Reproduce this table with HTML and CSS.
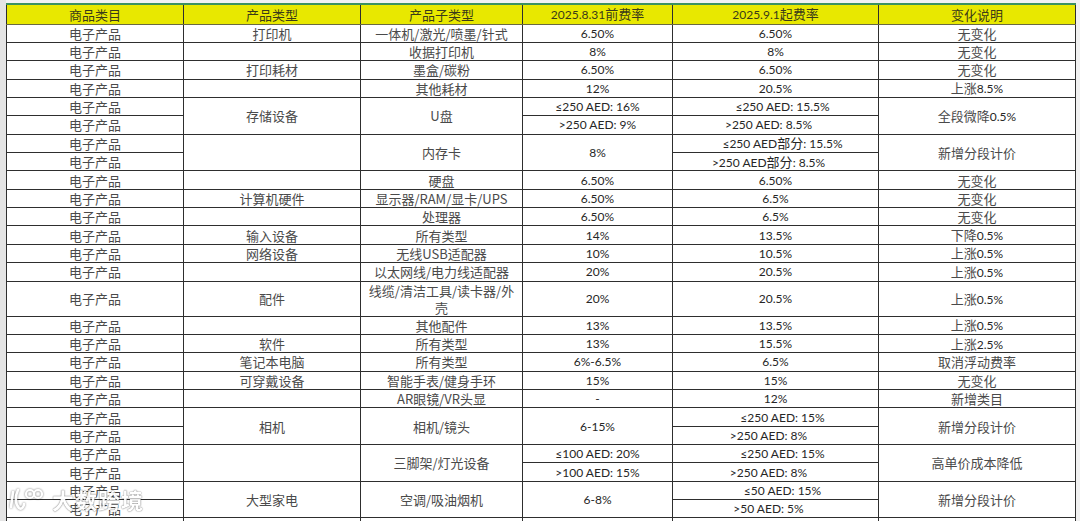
FILE: index.html
```html
<!DOCTYPE html>
<html lang="zh-CN">
<head>
<meta charset="utf-8">
<title>费率对比</title>
<link rel="stylesheet" href="styles.css">
</head>
<body>
<div class="sheet">
  <table class="grid">
    <colgroup>
      <col class="c1"><col class="c2"><col class="c3"><col class="c4"><col class="c5"><col class="c6">
    </colgroup>
    <thead>
      <tr class="head">
        <th>商品类目</th><th>产品类型</th><th>产品子类型</th><th class="n b">2025.8.31<span class="cj">前费率</span></th><th class="n b">2025.9.1<span class="cj">起费率</span></th><th>变化说明</th>
      </tr>
    </thead>
    <tbody>
      <tr><td>电子产品</td><td>打印机</td><td>一体机/激光/喷墨/针式</td><td class="n">6.50%</td><td class="n">6.50%</td><td>无变化</td></tr>
      <tr><td>电子产品</td><td></td><td>收据打印机</td><td class="n">8%</td><td class="n">8%</td><td>无变化</td></tr>
      <tr><td>电子产品</td><td>打印耗材</td><td>墨盒/碳粉</td><td class="n">6.50%</td><td class="n">6.50%</td><td>无变化</td></tr>
      <tr><td>电子产品</td><td></td><td>其他耗材</td><td class="n">12%</td><td class="n">20.5%</td><td>上涨<span class="n">8.5%</span></td></tr>
      <tr><td>电子产品</td><td rowspan="2">存储设备</td><td rowspan="2">U盘</td><td class="n">≤250 AED: 16%</td><td class="n le">≤250 AED: 15.5%</td><td rowspan="2">全段微降<span class="n">0.5%</span></td></tr>
      <tr><td>电子产品</td><td class="n">&gt;250 AED: 9%</td><td class="n gt">&gt;250 AED: 8.5%</td></tr>
      <tr><td>电子产品</td><td rowspan="2"></td><td rowspan="2">内存卡</td><td rowspan="2" class="n">8%</td><td class="n le">≤250 AED<span class="cj">部分</span>: 15.5%</td><td rowspan="2">新增分段计价</td></tr>
      <tr><td>电子产品</td><td class="n gt">&gt;250 AED<span class="cj">部分</span>: 8.5%</td></tr>
      <tr><td>电子产品</td><td></td><td>硬盘</td><td class="n">6.50%</td><td class="n">6.50%</td><td>无变化</td></tr>
      <tr><td>电子产品</td><td>计算机硬件</td><td>显示器/RAM/显卡/UPS</td><td class="n">6.50%</td><td class="n">6.5%</td><td>无变化</td></tr>
      <tr><td>电子产品</td><td></td><td>处理器</td><td class="n">6.50%</td><td class="n">6.5%</td><td>无变化</td></tr>
      <tr><td>电子产品</td><td>输入设备</td><td>所有类型</td><td class="n">14%</td><td class="n">13.5%</td><td>下降<span class="n">0.5%</span></td></tr>
      <tr><td>电子产品</td><td>网络设备</td><td>无线USB适配器</td><td class="n">10%</td><td class="n">10.5%</td><td>上涨<span class="n">0.5%</span></td></tr>
      <tr><td>电子产品</td><td></td><td>以太网线/电力线适配器</td><td class="n">20%</td><td class="n">20.5%</td><td>上涨<span class="n">0.5%</span></td></tr>
      <tr class="tall"><td>电子产品</td><td>配件</td><td class="wrap">线缆/清洁工具/读卡器/外<br>壳</td><td class="n">20%</td><td class="n">20.5%</td><td>上涨<span class="n">0.5%</span></td></tr>
      <tr><td>电子产品</td><td></td><td>其他配件</td><td class="n">13%</td><td class="n">13.5%</td><td>上涨<span class="n">0.5%</span></td></tr>
      <tr><td>电子产品</td><td>软件</td><td>所有类型</td><td class="n">13%</td><td class="n">15.5%</td><td>上涨<span class="n">2.5%</span></td></tr>
      <tr><td>电子产品</td><td>笔记本电脑</td><td>所有类型</td><td class="n">6%-6.5%</td><td class="n">6.5%</td><td>取消浮动费率</td></tr>
      <tr><td>电子产品</td><td>可穿戴设备</td><td>智能手表/健身手环</td><td class="n">15%</td><td class="n">15%</td><td>无变化</td></tr>
      <tr><td>电子产品</td><td></td><td>AR眼镜/VR头显</td><td class="n">-</td><td class="n">12%</td><td>新增类目</td></tr>
      <tr><td>电子产品</td><td rowspan="2">相机</td><td rowspan="2">相机/镜头</td><td rowspan="2" class="n">6-15%</td><td class="n le">≤250 AED: 15%</td><td rowspan="2">新增分段计价</td></tr>
      <tr><td>电子产品</td><td class="n gt">&gt;250 AED: 8%</td></tr>
      <tr><td>电子产品</td><td rowspan="2"></td><td rowspan="2">三脚架/灯光设备</td><td class="n">≤100 AED: 20%</td><td class="n le">≤250 AED: 15%</td><td rowspan="2">高单价成本降低</td></tr>
      <tr><td>电子产品</td><td class="n">&gt;100 AED: 15%</td><td class="n gt">&gt;250 AED: 8%</td></tr>
      <tr><td>电子产品</td><td rowspan="2">大型家电</td><td rowspan="2">空调/吸油烟机</td><td rowspan="2" class="n">6-8%</td><td class="n le">≤50 AED: 15%</td><td rowspan="2">新增分段计价</td></tr>
      <tr><td>电子产品</td><td class="n gt">&gt;50 AED: 5%</td></tr>
      <tr><td></td><td></td><td></td><td></td><td></td><td></td></tr>
    </tbody>
  </table>
  <div class="watermark">
    <svg class="wm-logo" width="36" height="28" viewBox="0 0 36 28">
      <path d="M5 7 L3 22 M10 5 C7 11 7 19 11 23 C14 25 16 21 16 19" fill="none" stroke="#fff" stroke-width="2.6" stroke-linecap="round"/>
      <circle cx="22" cy="9" r="4" fill="none" stroke="#fff" stroke-width="2.2"/>
      <circle cx="30" cy="9" r="4" fill="none" stroke="#fff" stroke-width="2.2"/>
    </svg>
    <span class="wm-text">大数跨境</span>
  </div>
</div>
</body>
</html>
```

FILE: styles.css
```css
html, body {
  margin: 0;
  padding: 0;
}
body {
  background: #f1f1f1;
  width: 1080px;
  height: 521px;
  overflow: hidden;
  font-family: "Noto Sans CJK SC", sans-serif;
  font-size: 13px;
  color: #4a4a4a;
}
.sheet {
  position: relative;
  padding: 3px 0 0 6px;
  background: linear-gradient(to right, #e4e4e4 0, #e4e4e4 6px, transparent 6px);
  height: 521px;
  box-sizing: border-box;
}
.grid {
  border-collapse: collapse;
  table-layout: fixed;
  width: 1069px;
  background: #fff;
}
.c1 { width: 177px; }
.c2 { width: 177px; }
.c3 { width: 162px; }
.c4 { width: 150px; }
.c5 { width: 206px; }
.c6 { width: 197px; }
.grid th,
.grid td {
  border: 1px solid #2e2e2e;
  padding: 0;
  text-align: center;
  vertical-align: middle;
  line-height: 15px;
  white-space: nowrap;
  overflow: hidden;
  font-weight: normal;
}
.grid tbody tr {
  height: 18.36px;
}
.grid tbody tr.tall {
  height: 35px;
}
.grid td.wrap {
  line-height: 17px;
}
.head {
  height: 20px;
}
.head th {
  background: #e8e800;
  color: #3a3a1a;
  border-top: 2px solid #3b9160;
  border-bottom: 1px solid #6a6a40;
}
.n {
  font-family: Lato, "Noto Sans CJK SC", sans-serif;
  font-size: 12px;
  color: #262626;
}
.b {
  font-weight: 600;
}
.cj {
  font-family: "Noto Sans CJK SC", sans-serif;
  font-size: 13px;
  font-weight: normal;
}
.le {
  padding-left: 14px !important;
}
.gt {
  padding-right: 14px !important;
}
.watermark {
  position: absolute;
  left: 8px;
  top: 483px;
  display: flex;
  align-items: center;
  gap: 8px;
  opacity: 0.92;
}
.wm-logo {
  filter: drop-shadow(0 0 1px rgba(0,0,0,0.55));
}
.wm-text {
  font-family: "Noto Sans CJK SC", sans-serif;
  font-size: 22px;
  font-weight: bold;
  color: #fff;
  letter-spacing: 1px;
  text-shadow: 0 0 1px rgba(0,0,0,0.6), 0 0 2px rgba(0,0,0,0.35);
}
```
